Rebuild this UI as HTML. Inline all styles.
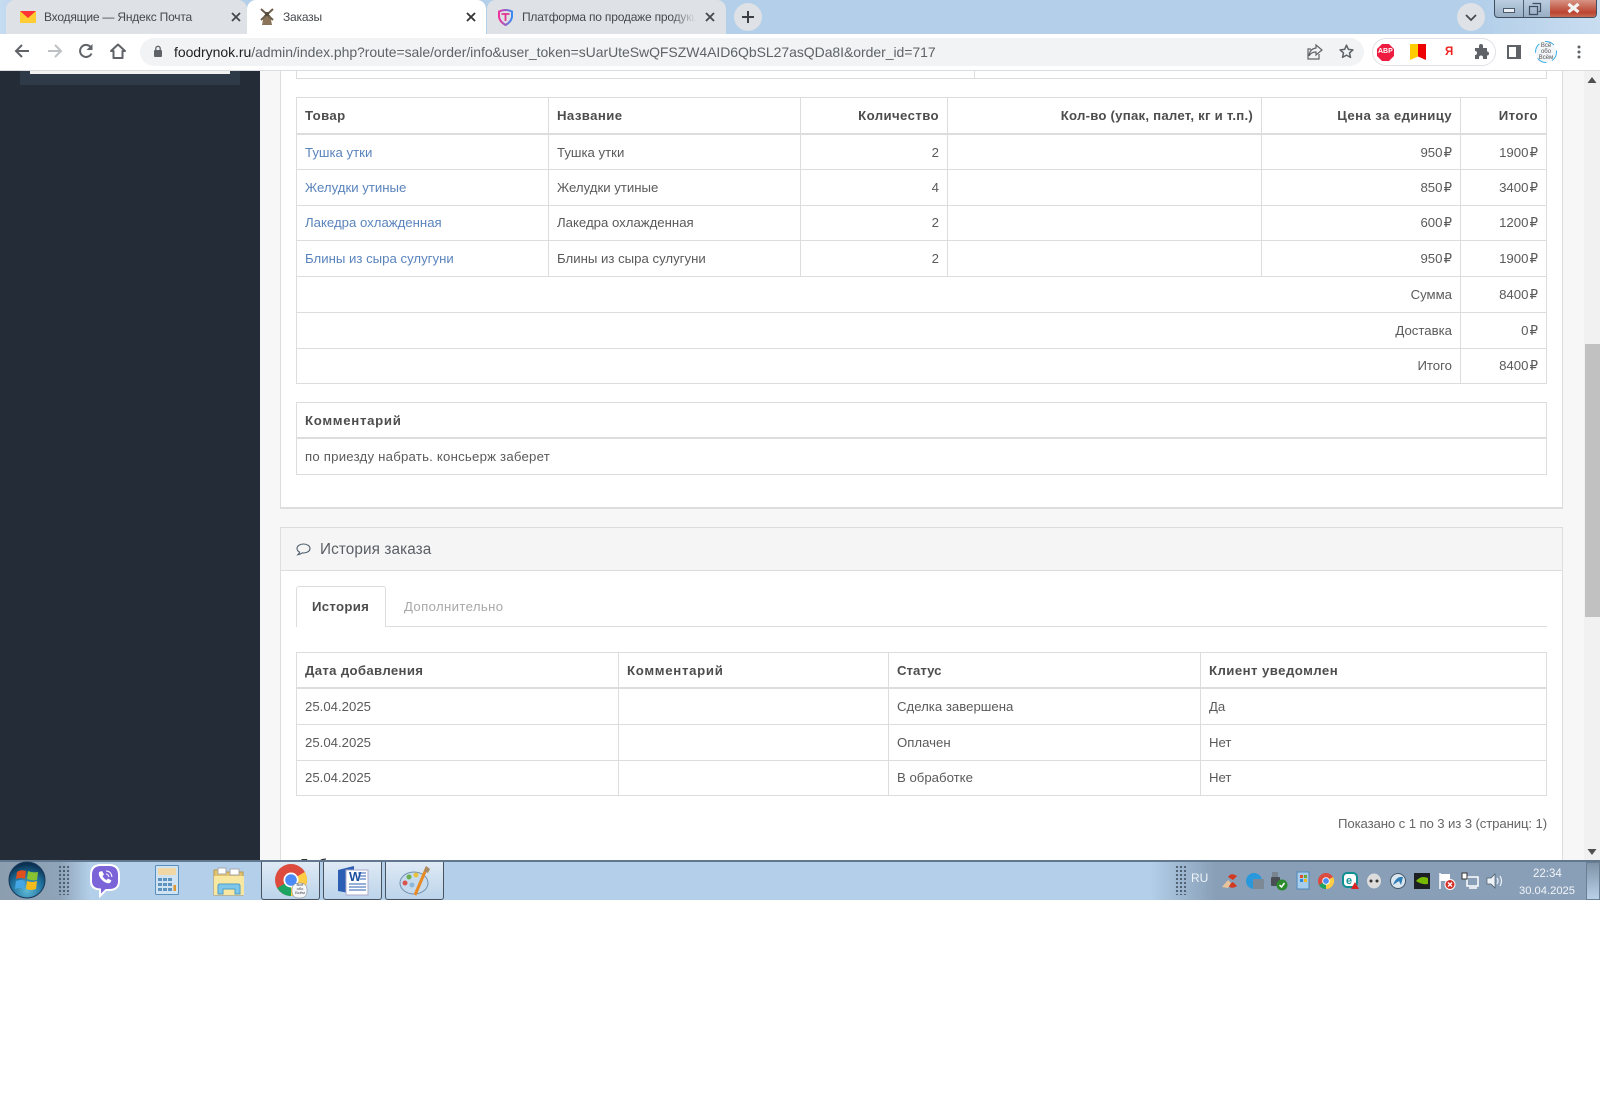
<!DOCTYPE html>
<html lang="ru"><head><meta charset="utf-8"><title>Заказы</title>
<style>
*{box-sizing:border-box}
html,body{margin:0;padding:0;width:1600px;height:1114px;background:#fff;overflow:hidden;font-family:"Liberation Sans","DejaVu Sans",sans-serif;color:#4f4f4f}
.a{position:absolute}
.t{position:absolute;white-space:nowrap}
svg{position:absolute;overflow:visible}
#bar{left:0;top:0;width:1600px;height:34px;background:linear-gradient(90deg,#c6dcf1 0,#b3cfe9 30px,#b3cfe9 1480px,#c9ddf0 1600px)}
.tab{position:absolute;top:0;height:34px;background:#dee1e6;border-radius:9px 9px 0 0}
.tl{font-size:12px;color:#45484d;top:10px;letter-spacing:-.2px}
#tool{left:0;top:34px;width:1600px;height:37px;background:#fff;border-bottom:1px solid #dadce0}
#addr{left:140px;top:38px;width:1224px;height:28px;background:#f1f3f4;border-radius:14px}
#page{left:0;top:71px;width:1600px;height:789px;overflow:hidden;background:#f7f7f7}
table{border-collapse:collapse;table-layout:fixed;position:absolute;font-size:13.2px;line-height:16px;color:#5a5a5a;background:#fff}
td{border:1px solid #ddd;padding:0 8px;height:35px;overflow:hidden;white-space:nowrap}
thead td{font-weight:bold;border-bottom:2px solid #ddd;color:#4d4d4d;letter-spacing:.4px;padding-top:2px}
.p1 td{padding-top:2px}
.r{text-align:right}
.m{text-align:right;word-spacing:-2.5px}
.lk{color:#5a84bd}
#task{left:0;top:860px;width:1600px;height:40px;background:linear-gradient(90deg,#8b9dae 0,#8fa4b9 60px,#b3cfe9 90px,#b3cfe9 1150px,#889fb7 1215px,#889fb7 1600px);border-top:2px solid #62788e}
.tb{position:absolute;top:0;height:38px;width:59px;border:1px solid #48535f;border-top:0;border-radius:0 0 3px 3px;background:linear-gradient(#dfeaf5,#bcd4ea)}
.dots{position:absolute;width:8px;height:30px;background-image:radial-gradient(circle,#4e5f70 1px,transparent 1.3px);background-size:4px 4px}
</style></head><body>

<div class="a" id="bar"></div>
<div class="tab" style="left:6px;width:241px"></div>
<div class="tab" style="left:247px;width:239px;background:#fff"></div>
<div class="tab" style="left:487px;width:239px"></div>

<svg style="left:20px;top:11px" width="16" height="12" viewBox="0 0 16 12"><rect width="16" height="12" fill="#fc3"/><path d="M0 0h16L8 7z" fill="#f33"/></svg>
<div class="t tl" style="left:44px">Входящие — Яндекс Почта</div>
<svg style="left:231px;top:12px" width="10" height="10" viewBox="0 0 10 10"><path d="M1 1l8 8M9 1L1 9" stroke="#45484d" stroke-width="1.8"/></svg>

<svg style="left:259px;top:8px" width="16" height="18" viewBox="0 0 16 18"><path d="M5 7h6l2 10H3z" fill="#8a7358"/><path d="M2 1l12 11M14 1L2 12" stroke="#6d5d4b" stroke-width="2"/><circle cx="8" cy="6" r="2" fill="#54483a"/></svg>
<div class="t tl" style="left:283px">Заказы</div>
<svg style="left:466px;top:12px" width="10" height="10" viewBox="0 0 10 10"><path d="M1 1l8 8M9 1L1 9" stroke="#333" stroke-width="1.8"/></svg>

<svg style="left:497px;top:9px" width="17" height="17" viewBox="0 0 17 17"><path d="M2 2.5Q8.500 -.5 15 2.500V8Q14 13 8.500 16Q3 13 2 8z" fill="none" stroke="url(#g)" stroke-width="2"/><path d="M4.500 5h8M8.500 5v7" stroke="#e0348f" stroke-width="1.800"/><defs><linearGradient id="g" x1="0" x2="1"><stop offset="0" stop-color="#f0309c"/><stop offset="1" stop-color="#3a8cf0"/></linearGradient></defs></svg>
<div class="t tl" style="left:522px;width:174px;overflow:hidden">Платформа по продаже продукции</div>
<div class="a" style="left:672px;top:8px;width:24px;height:18px;background:linear-gradient(90deg,rgba(222,225,230,0),#dee1e6)"></div>
<svg style="left:705px;top:12px" width="10" height="10" viewBox="0 0 10 10"><path d="M1 1l8 8M9 1L1 9" stroke="#45484d" stroke-width="1.8"/></svg>
<div class="a" style="left:734px;top:3px;width:28px;height:28px;border-radius:50%;background:#dee1e6"></div>
<svg style="left:741px;top:10px" width="14" height="14" viewBox="0 0 14 14"><path d="M7 1v12M1 7h12" stroke="#3c4043" stroke-width="2"/></svg>

<div class="a" style="left:1457px;top:3px;width:28px;height:28px;border-radius:50%;background:#dee1e6"></div>
<svg style="left:1465px;top:14px" width="12" height="7" viewBox="0 0 12 7"><path d="M1 1l5 5 5-5" fill="none" stroke="#45484d" stroke-width="1.700"/></svg>

<div class="a" style="left:1494px;top:-2px;width:103px;height:20px;border:1px solid #3f4f60;border-radius:0 0 4px 4px;background:linear-gradient(#bdd0e3,#98aec4);overflow:hidden">
  <div class="a" style="left:28px;top:0;width:1px;height:18px;background:#4d5f70"></div>
  <div class="a" style="left:55px;top:0;width:47px;height:18px;background:linear-gradient(#d99a8c,#bb4430 75%,#c76a55)"></div>
</div>
<div class="a" style="left:1503px;top:8px;width:12px;height:5px;background:#e8eef4;border:1px solid #4a5a6a"></div>
<svg style="left:1529px;top:3px" width="12" height="12" viewBox="0 0 12 12"><path d="M3.500.5h8v8h-2M.5 3.500h8v8h-8z" fill="none" stroke="#3f4f60" stroke-width="1.200"/></svg>
<svg style="left:1567px;top:3px" width="13" height="10" viewBox="0 0 13 10"><path d="M1.500 1l10 8M11.500 1l-10 8" stroke="#f3f3f3" stroke-width="3.200"/></svg>

<div class="a" id="tool"></div>
<svg style="left:14px;top:43px" width="16" height="16" viewBox="0 0 16 16"><path d="M15 8H2M8 2L2 8l6 6" fill="none" stroke="#5f6368" stroke-width="2"/></svg>
<svg style="left:47px;top:43px" width="16" height="16" viewBox="0 0 16 16"><path d="M1 8h13M8 2l6 6-6 6" fill="none" stroke="#bdc1c6" stroke-width="2"/></svg>
<svg style="left:78px;top:43px" width="16" height="16" viewBox="0 0 16 16"><path d="M13.500 10.500A6 6 0 1 1 13 4.500" fill="none" stroke="#5f6368" stroke-width="2"/><path d="M14.500 1v6h-6z" fill="#5f6368"/></svg>
<svg style="left:110px;top:43px" width="16" height="16" viewBox="0 0 16 16"><path d="M8 1.500L1 8h2.500v7h9V8H15z" fill="none" stroke="#5f6368" stroke-width="2" stroke-linejoin="round"/></svg>
<div class="a" id="addr"></div>
<svg style="left:153px;top:45px" width="10" height="13" viewBox="0 0 10 13"><rect x="1" y="5" width="8" height="7" rx="1" fill="#5f6368"/><path d="M2.800 5V3.500a2.200 2.200 0 0 1 4.400 0V5" fill="none" stroke="#5f6368" stroke-width="1.300"/></svg>
<div class="t" style="left:174px;top:44px;font-size:14px;color:#5f6368;letter-spacing:-.05px"><span style="color:#202124">foodrynok.ru</span>/admin/index.php?route=sale/order/info&amp;user_token=sUarUteSwQFSZW4AID6QbSL27asQDa8I&amp;order_id=717</div>
<svg style="left:1307px;top:44px" width="16" height="16" viewBox="0 0 16 16"><path d="M9 1l6 5-6 5V8Q4 8 2 12q.5-7 7-8zM12 10v5H1V5h3" fill="none" stroke="#5f6368" stroke-width="1.200"/></svg>
<svg style="left:1339px;top:44px" width="15" height="15" viewBox="0 0 15 15"><path d="M7.500 1.200l1.900 4.200 4.500.5-3.400 3 1 4.500-4-2.300-4 2.300 1-4.500-3.400-3 4.500-.5z" fill="none" stroke="#5f6368" stroke-width="1.500" stroke-linejoin="round"/></svg>
<div class="a" style="left:1372px;top:38px;width:124px;height:28px;border:1px solid #dfe1e5;border-radius:14px;background:#fff"></div>
<svg style="left:1377px;top:44px" width="17" height="17" viewBox="0 0 17 17"><path d="M5 0h7l5 5v7l-5 5H5l-5-5V5z" fill="#ee1c40"/></svg>
<div class="t" style="left:1378px;top:48px;font-size:7px;font-weight:bold;color:#fff">ABP</div>
<svg style="left:1410px;top:44px" width="16" height="16" viewBox="0 0 16 16"><path d="M0 0h8v12.500L0 16z" fill="#fc0"/><path d="M8 0h8v16l-8-3.500z" fill="#e00"/></svg>
<div class="t" style="left:1445px;top:46px;font-size:11.500px;font-weight:bold;color:#e22">Я</div>
<svg style="left:1474px;top:44px" width="16" height="15" viewBox="0 0 16 15"><path d="M1 4h4V2a2 2 0 0 1 4 0v2h4v3.500a2 2 0 0 1 0 4V15H9v-1.500a2 2 0 0 0-4 0V15H1v-4a2 2 0 0 0 0-4z" fill="#5f6368"/></svg>
<svg style="left:1507px;top:45px" width="14" height="14" viewBox="0 0 14 14"><rect x="1" y="1" width="12" height="12" fill="none" stroke="#5f6368" stroke-width="2"/><rect x="9" y="1" width="4" height="12" fill="#5f6368"/></svg>
<svg style="left:1535px;top:41px" width="22" height="22" viewBox="0 0 22 22"><circle cx="11" cy="11" r="10.500" fill="#f4f7fa" stroke="#3db0e6" stroke-dasharray="10 6" stroke-width="1"/></svg>
<div class="t" style="left:1538px;top:43px;font-size:6px;line-height:6px;color:#555;text-align:center;width:16px;white-space:normal">Всё обо Всём</div>
<svg style="left:1577px;top:45px" width="4" height="14" viewBox="0 0 4 14"><circle cx="2" cy="2" r="1.500" fill="#5f6368"/><circle cx="2" cy="7" r="1.500" fill="#5f6368"/><circle cx="2" cy="12" r="1.500" fill="#5f6368"/></svg>

<div class="a" id="page">
  <div class="a" style="left:0;top:0;width:260px;height:789px;background:#242c38"></div>
  <div class="a" style="left:20px;top:0;width:220px;height:14px;background:#2e3a47"></div>
  <div class="a" style="left:30px;top:0;width:200px;height:3px;background:#f1f1f1"></div>

  <!-- main panel -->
  <div class="a" style="left:280px;top:-10px;width:1283px;height:448px;background:#fff;border:1px solid #ddd;border-bottom-width:2px"></div>
  <div class="a" style="left:296px;top:-5px;width:1251px;height:13px;background:#fff;border:1px solid #ddd"></div>
  <div class="a" style="left:974px;top:0;width:1px;height:7px;background:#ddd"></div>

  <table style="left:296px;top:26px;width:1250px">
    <colgroup><col style="width:252px"><col style="width:252px"><col style="width:147px"><col style="width:314px"><col style="width:199px"><col style="width:86px"></colgroup>
    <thead><tr><td style="height:36px">Товар</td><td>Название</td><td class="r">Количество</td><td class="r" style="letter-spacing:.23px">Кол-во (упак, палет, кг и т.п.)</td><td class="r">Цена за единицу</td><td class="r">Итого</td></tr></thead>
    <tbody>
      <tr class="p1"><td class="lk" style="height:36px">Тушка утки</td><td>Тушка утки</td><td class="r">2</td><td></td><td class="m">950 ₽</td><td class="m">1900 ₽</td></tr>
      <tr><td class="lk" style="height:36px">Желудки утиные</td><td>Желудки утиные</td><td class="r">4</td><td></td><td class="m">850 ₽</td><td class="m">3400 ₽</td></tr>
      <tr><td class="lk">Лакедра охлажденная</td><td>Лакедра охлажденная</td><td class="r">2</td><td></td><td class="m">600 ₽</td><td class="m">1200 ₽</td></tr>
      <tr><td class="lk" style="height:36px">Блины из сыра сулугуни</td><td>Блины из сыра сулугуни</td><td class="r">2</td><td></td><td class="m">950 ₽</td><td class="m">1900 ₽</td></tr>
      <tr><td colspan="5" class="r" style="height:36px">Сумма</td><td class="m">8400 ₽</td></tr>
      <tr><td colspan="5" class="r" style="height:36px">Доставка</td><td class="m">0 ₽</td></tr>
      <tr><td colspan="5" class="r">Итого</td><td class="m">8400 ₽</td></tr>
    </tbody>
  </table>

  <table style="left:296px;top:331px;width:1251px">
    <thead><tr><td style="height:35px;letter-spacing:.7px">Комментарий</td></tr></thead>
    <tbody class="p1"><tr><td style="height:37px;letter-spacing:.22px">по приезду набрать. консьерж заберет</td></tr></tbody>
  </table>

  <!-- history panel -->
  <div class="a" style="left:280px;top:456px;width:1283px;height:400px;background:#fff;border:1px solid #ddd"></div>
  <div class="a" style="left:281px;top:457px;width:1281px;height:43px;background:#f5f5f5;border-bottom:1px solid #ddd"></div>
  <svg style="left:296px;top:472px" width="15" height="14" viewBox="0 0 15 14"><path d="M7.500 1C3.900 1 1 3 1 5.500c0 1.500 1 2.800 2.600 3.600-.2 1-.8 1.900-1.600 2.600 1.700-.2 3-.9 4.200-1.800.4 0 .9.100 1.300.100 3.600 0 6.500-2 6.500-4.500S11.100 1 7.500 1z" fill="none" stroke="#4d5c6a" stroke-width="1.100"/></svg>
  <div class="t" style="left:320px;top:470px;font-size:15.300px;color:#5a5f66;letter-spacing:.1px">История заказа</div>

  <div class="a" style="left:296px;top:555px;width:1251px;height:1px;background:#ddd"></div>
  <div class="a" style="left:296px;top:515px;width:90px;height:41px;background:#fff;border:1px solid #ddd;border-bottom:0;border-radius:3px 3px 0 0"></div>
  <div class="t" style="left:312px;top:528px;font-size:13.2px;font-weight:bold;color:#4d4d4d;letter-spacing:.3px">История</div>
  <div class="t" style="left:404px;top:528px;font-size:13.2px;color:#a8a8a8;letter-spacing:.35px">Дополнительно</div>

  <table style="left:296px;top:581px;width:1250px">
    <colgroup><col style="width:322px"><col style="width:270px"><col style="width:312px"><col style="width:346px"></colgroup>
    <thead><tr><td style="height:35px;letter-spacing:.33px">Дата добавления</td><td style="letter-spacing:.7px">Комментарий</td><td style="letter-spacing:0">Статус</td><td style="letter-spacing:.44px">Клиент уведомлен</td></tr></thead>
    <tbody>
      <tr class="p1"><td style="height:37px">25.04.2025</td><td></td><td>Сделка завершена</td><td>Да</td></tr>
      <tr><td style="height:36px">25.04.2025</td><td></td><td>Оплачен</td><td>Нет</td></tr>
      <tr><td style="height:35px">25.04.2025</td><td></td><td>В обработке</td><td>Нет</td></tr>
    </tbody>
  </table>
  <div class="t" style="right:53px;top:745px;font-size:13.200px;color:#666;letter-spacing:-.12px">Показано с 1 по 3 из 3 (страниц: 1)</div>
  <div class="t" style="left:298px;top:786px;font-size:16px;color:#333">Добавить</div>

  <!-- scrollbar -->
  <div class="a" style="left:1584px;top:0;width:16px;height:789px;background:#f1f1f1"></div>
  <div class="a" style="left:1585px;top:273px;width:15px;height:273px;background:#c1c1c1"></div>
  <svg style="left:1587px;top:6px" width="10" height="6" viewBox="0 0 10 6"><path d="M5 0l4.500 6h-9z" fill="#505050"/></svg>
  <svg style="left:1587px;top:778px" width="10" height="6" viewBox="0 0 10 6"><path d="M5 6L.5 0h9z" fill="#505050"/></svg>
</div>

<div class="a" id="task">
  <svg style="left:9px;top:0" width="36" height="36" viewBox="0 0 36 36"><defs><radialGradient id="o" cx=".5" cy=".8" r=".75"><stop offset="0" stop-color="#5fb9d6"/><stop offset=".6" stop-color="#1e6f9c"/><stop offset="1" stop-color="#0b2f4f"/></radialGradient></defs><circle cx="18" cy="18" r="18" fill="url(#o)" stroke="#17385a"/><path d="M8 10q4-3 9-1l-1 8q-4-2-9 0z" fill="#e0501e"/><path d="M19 9q4 2 10 1l-1 8q-5 1-10-1z" fill="#86c232"/><path d="M7 19q5-2 9 0l-1 8q-4-2-9 0z" fill="#45a6e6"/><path d="M18 19q5 2 10 0l-1 8q-5 2-10 0z" fill="#f4bb1c"/></svg>
  <div class="dots" style="left:58px;top:3px"></div><div class="dots" style="left:62px;top:3px"></div>
  <svg style="left:90px;top:2px" width="30" height="34" viewBox="0 0 30 34"><path d="M11 1h8q10 0 10 10v6q0 9-10 9h-3l-6 6v-6.500Q1 25 1 17v-6Q1 1 11 1z" fill="#7b63d8" stroke="#fff" stroke-width="2"/><path d="M9 8q-1 4 3 8t8 3l1.500-2.500-3.500-2-1.500 1.500q-3-1.500-4-4l1.500-1.500-2-3.500z" fill="#fff"/><path d="M16 7q5 0 6 6M16 10q2 0 3 3" fill="none" stroke="#fff"/></svg>
  <svg style="left:155px;top:3px" width="24" height="30" viewBox="0 0 24 30"><rect x=".5" y=".5" width="23" height="29" rx="1" fill="#cfe3f3" stroke="#5a90bc"/><rect x="3" y="3" width="18" height="7" fill="#f0d7a4"/><path d="M3 13h4v3H3zM8 13h4v3H8zM13 13h4v3h-4zM3 18h4v3H3zM8 18h4v3H8zM13 18h4v3h-4zM3 23h4v3H3zM8 23h4v3H8zM13 23h4v3h-4z" fill="#5e93c0"/><rect x="18.500" y="20" width="2.500" height="6" fill="#e0952e"/></svg>
  <svg style="left:213px;top:5px" width="32" height="28" viewBox="0 0 32 28"><path d="M1 3h9l2 2h18v23H1z" fill="#e3c36c" stroke="#b89a50"/><rect x="5" y="1" width="8" height="6" fill="#fff" stroke="#aaa"/><rect x="17" y="2" width="9" height="6" fill="#fff" stroke="#aaa"/><path d="M1 9h30v19H1z" fill="#f8e7a0"/><path d="M5 27v-8q0-2 2-2h18q2 0 2 2v8h-5v-5H10v5z" fill="#7ec6ea" stroke="#4f9dc7"/></svg>

  <div class="tb" style="left:261px"></div>
  <svg style="left:275px;top:2px" width="34" height="34" viewBox="0 0 34 34"><circle cx="16" cy="16" r="16" fill="#dd4b3e"/><path d="M16 16L2.200 24A16 16 0 0 0 16 32z" fill="#1da462"/><path d="M16 16L29.800 8A16 16 0 0 1 32 16 16 16 0 0 1 16 32z" fill="#ffce44"/><circle cx="16" cy="16" r="7.500" fill="#fff"/><circle cx="16" cy="16" r="5.800" fill="#4c8bf5"/><rect x="17" y="19" width="15" height="15" rx="6" fill="#f4f7fa" stroke="#777" stroke-width=".5"/></svg>
  <div class="t" style="left:293px;top:21px;font-size:4px;line-height:4px;width:14px;text-align:center;white-space:normal;color:#444">Всё обо Всём</div>
  <div class="tb" style="left:323px"></div>
  <svg style="left:337px;top:3px" width="32" height="32" viewBox="0 0 32 32"><path d="M1 5l16-4v28L1 26z" fill="#2c5fb3"/><rect x="9" y="5" width="22" height="25" fill="#fff" stroke="#aac"/><text x="12" y="16" font-size="13" font-weight="bold" fill="#1f4fa0" font-family="Liberation Sans">W</text><path d="M21 8h8M23 11h6M23 14h6M12 19h17M12 22h17M12 25h17" stroke="#2c5fb3"/></svg>
  <div class="tb" style="left:385px"></div>
  <svg style="left:399px;top:3px" width="32" height="32" viewBox="0 0 32 32"><ellipse cx="15" cy="18" rx="14" ry="11" fill="#c6dbee" stroke="#6f90ae"/><circle cx="6" cy="18" r="2.500" fill="#d9534f"/><circle cx="10" cy="12" r="2.500" fill="#6bb04c"/><circle cx="17" cy="10" r="2.500" fill="#e8c13e"/><circle cx="13" cy="20" r="2.500" fill="#8fb8d8"/><path d="M28 2L16 30" stroke="#e88a24" stroke-width="3"/><path d="M27 1l4 3-2 4-4-2z" fill="#a98a64"/></svg>

  <div class="dots" style="left:1175px;top:3px"></div><div class="dots" style="left:1179px;top:3px"></div>
  <div class="t" style="left:1191px;top:9px;font-size:12px;color:#eef3f8">RU</div>
  <svg style="left:1221px;top:11px" width="18" height="16" viewBox="0 0 18 16"><path d="M16 3Q10-1 7 4l5 3zM16 13q-6 4-9-1l5-3z" fill="#d2391f"/><path d="M1 14l6-7 3 3-3 5z" fill="#e8c49a"/></svg>
  <svg style="left:1246px;top:11px" width="18" height="16" viewBox="0 0 18 16"><circle cx="8" cy="8" r="8" fill="#2a98dc"/><rect x="7" y="6" width="11" height="10" rx="1" fill="#7d8a96"/></svg>
  <svg style="left:1270px;top:9px" width="18" height="20" viewBox="0 0 18 20"><rect x="2" y="1" width="6" height="5" fill="#7a8590"/><rect x="1" y="6" width="9" height="9" rx="1" fill="#4a4f55"/><circle cx="12" cy="14" r="5.500" fill="#2b8a2b"/><path d="M9.500 14l2 2 3-4" stroke="#fff" fill="none" stroke-width="1.500"/></svg>
  <svg style="left:1294px;top:9px" width="18" height="20" viewBox="0 0 18 20"><rect x="3" y="1" width="12" height="17" fill="#a7cdec" stroke="#4f88b8"/><rect x="6" y="4" width="3" height="3" fill="#e04b2a"/><rect x="10" y="4" width="3" height="3" fill="#6aa92b"/><rect x="6" y="8" width="3" height="3" fill="#2d8ad6"/><rect x="10" y="8" width="3" height="3" fill="#f2b71c"/></svg>
  <svg style="left:1318px;top:11px" width="16" height="16" viewBox="0 0 16 16"><circle cx="8" cy="8" r="8" fill="#dd4b3e"/><path d="M8 8L1 12A8 8 0 0 0 8 16z" fill="#1da462"/><path d="M8 8L15 4A8 8 0 0 1 8 16z" fill="#ffce44"/><circle cx="8" cy="8" r="3.800" fill="#fff"/><circle cx="8" cy="8" r="2.900" fill="#4c8bf5"/></svg>
  <svg style="left:1342px;top:10px" width="18" height="18" viewBox="0 0 18 18"><rect x="1" y="1" width="14" height="14" rx="4" fill="#fff" stroke="#0e8f92" stroke-width="2"/><text x="4" y="12" font-size="11" font-weight="bold" fill="#0e8f92" font-family="Liberation Sans">e</text><path d="M13 10l4 7H9z" fill="#d22"/></svg>
  <svg style="left:1366px;top:11px" width="16" height="16" viewBox="0 0 16 16"><ellipse cx="8" cy="8" rx="7" ry="7.500" fill="#dcdcdc"/><circle cx="5" cy="8" r="1.500" fill="#333"/><circle cx="11" cy="8" r="1.500" fill="#333"/></svg>
  <svg style="left:1390px;top:11px" width="16" height="16" viewBox="0 0 16 16"><circle cx="8" cy="8" r="7.500" fill="#dce6ee" stroke="#45586a"/><path d="M3 12Q6 3 13 4l-2 8-2-4z" fill="#2f7db8"/></svg>
  <svg style="left:1414px;top:11px" width="16" height="16" viewBox="0 0 16 16"><rect width="16" height="16" fill="#1c1f24"/><path d="M2 8q5-6 12-3v6Q8 12 2 8z" fill="#76b900"/></svg>
  <svg style="left:1438px;top:10px" width="18" height="18" viewBox="0 0 18 18"><path d="M2 1v16" stroke="#fff" stroke-width="1.500"/><path d="M2 2h10v7H2z" fill="#fff"/><circle cx="12" cy="12.500" r="5" fill="#d4302a" stroke="#fff"/><path d="M10 10.500l4 4M14 10.500l-4 4" stroke="#fff" stroke-width="1.300"/></svg>
  <svg style="left:1461px;top:10px" width="18" height="18" viewBox="0 0 18 18"><rect x="6" y="5" width="11" height="9" fill="none" stroke="#fff" stroke-width="1.500"/><rect x="1" y="1" width="5" height="6" fill="#fff" stroke="#333"/><path d="M8 16h8" stroke="#fff" stroke-width="1.500"/></svg>
  <svg style="left:1486px;top:10px" width="18" height="18" viewBox="0 0 18 18"><path d="M1 6h4l4-4v14l-4-4H1z" fill="#eef3f7" stroke="#4c5c6c" stroke-width=".7"/><path d="M11 6q2 3 0 6M14 4q3 5 0 10" fill="none" stroke="#eef3f7" stroke-width="1.200"/></svg>
  <div class="t" style="left:1533px;top:6px;font-size:11.500px;color:#f2f5f8">22:34</div>
  <div class="t" style="left:1519px;top:23px;font-size:11.200px;color:#f2f5f8;line-height:12px">30.04.2025</div>
  <div class="a" style="left:1586px;top:0;width:14px;height:38px;border:1px solid #6b7f93;background:linear-gradient(#7e93a8,#b9d1e8)"></div>
</div>
</body></html>
